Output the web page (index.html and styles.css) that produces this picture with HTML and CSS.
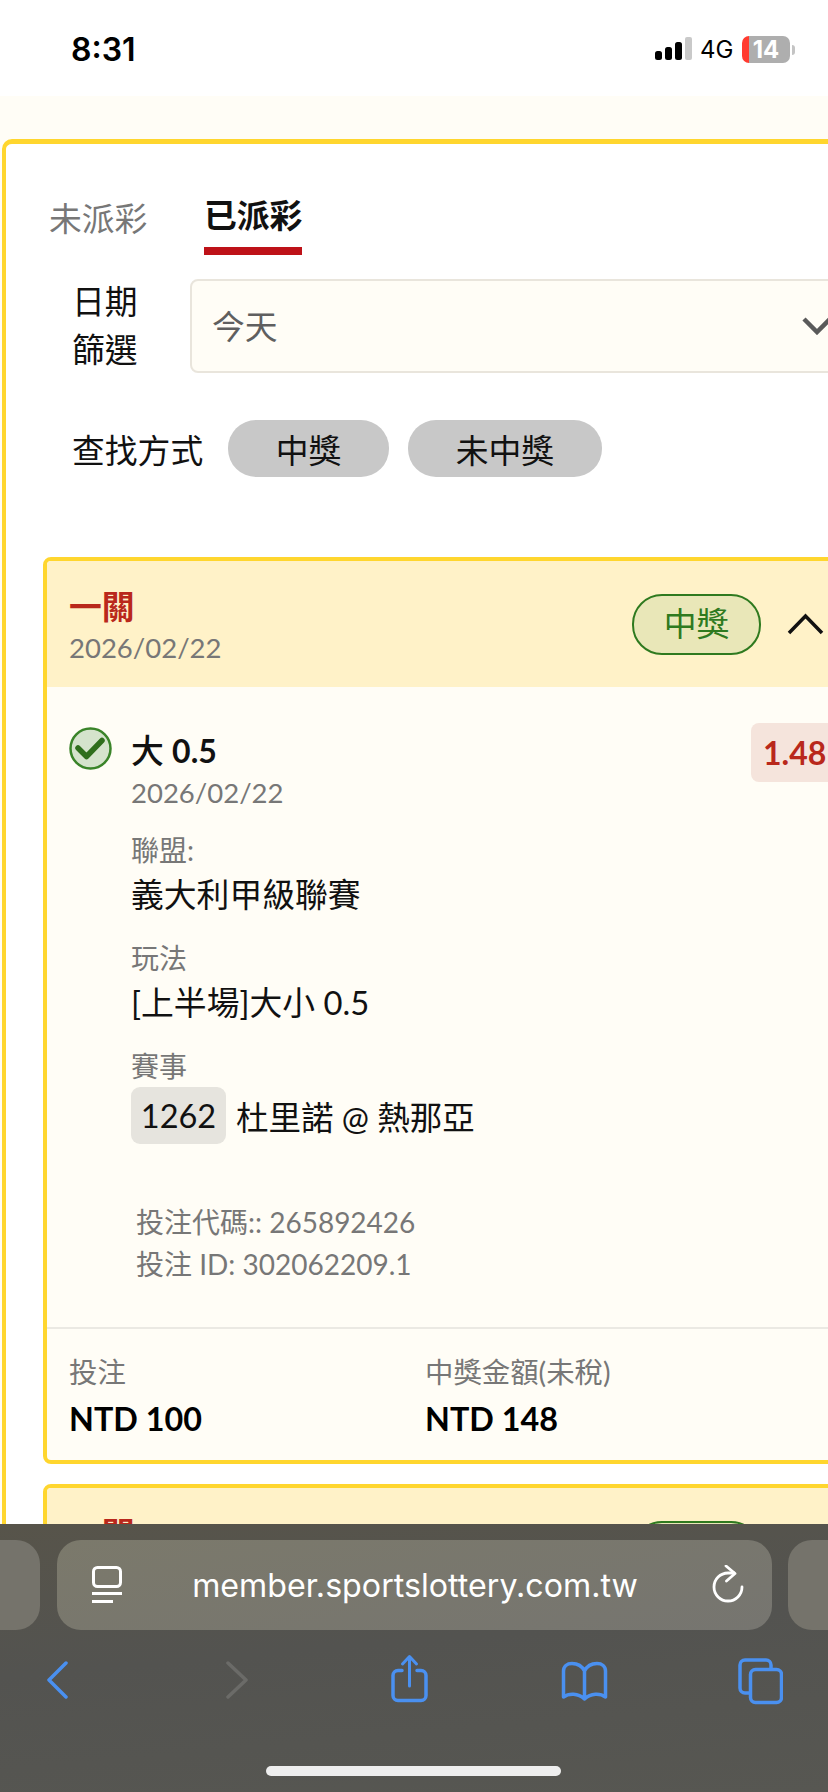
FILE: index.html
```html
<!DOCTYPE html>
<html lang="zh-Hant">
<head>
    <meta charset="UTF-8">
    <meta name="viewport" content="width=device-width, initial-scale=1.0">
    <title>已派彩</title>
    <link rel="stylesheet" href="styles.css">
</head>
<body>
<div class="phone">

    <div class="status-bar">
        <div class="time">8:31</div>
        <div class="status-icons">
            <svg class="signal" width="37" height="23" viewBox="0 0 37 23">
                <rect x="0" y="14" width="7" height="9" rx="2.5" fill="#000"/>
                <rect x="10" y="10" width="7" height="13" rx="2.5" fill="#000"/>
                <rect x="20" y="5" width="7" height="18" rx="2.5" fill="#000"/>
                <rect x="30" y="0" width="7" height="23" rx="2" fill="#c9c9c9"/>
            </svg>
            <span class="network">4G</span>
            <div class="battery">14</div>
            <div class="battery-tip"></div>
        </div>
    </div>

    <div class="page">
        <div class="panel">
            <div class="tabs">
                <div class="tab">未派彩</div>
                <div class="tab active">已派彩</div>
            </div>

            <div class="filter-row">
                <div class="filter-label">日期<br>篩選</div>
                <div class="select">
                    <span class="select-text">今天</span>
                    <svg width="30" height="18" viewBox="0 0 30 18"><path d="M2 2l13 13L28 2" fill="none" stroke="#5a5a5a" stroke-width="4.500"/></svg>
                </div>
            </div>

            <div class="search-row">
                <div class="search-label">查找方式</div>
                <button class="pill">中獎</button>
                <button class="pill">未中獎</button>
            </div>

            <div class="card">
                <div class="card-head">
                    <div class="card-name">
                        <div class="card-title">一關</div>
                        <div class="card-date">2026/02/22</div>
                    </div>
                    <div class="card-status">
                        <span class="badge">中獎</span>
                        <svg width="37" height="22" viewBox="0 0 37 22"><path d="M2 20L18.500 3 35 20" fill="none" stroke="#111" stroke-width="3.500"/></svg>
                    </div>
                </div>

                <div class="card-body">
                    <div class="selection">
                        <svg class="check" width="43" height="43" viewBox="0 0 43 43">
                            <circle cx="21.500" cy="21.500" r="20" fill="#d5e3cc" stroke="#3a8429" stroke-width="2.500"/>
                            <path d="M9 21l8.500 8.500L33 13.500" fill="none" stroke="#2f6e1c" stroke-width="5.500" stroke-linecap="round" stroke-linejoin="round"/>
                        </svg>
                        <div class="selection-info">
                            <div class="selection-top">
                                <div>
                                    <div class="pick">大 <span class="pick-num">0.5</span></div>
                                    <div class="pick-date">2026/02/22</div>
                                </div>
                                <div class="odds">1.48</div>
                            </div>
                            <div class="label first">聯盟:</div>
                            <div class="value">義大利甲級聯賽</div>
                            <div class="label">玩法</div>
                            <div class="value">[上半場]大小 0.5</div>
                            <div class="label">賽事</div>
                            <div class="match">
                                <span class="match-no">1262</span>
                                <span>杜里諾 @ 熱那亞</span>
                            </div>
                        </div>
                    </div>
                    <div class="codes">
                        <div>投注代碼:: 265892426</div>
                        <div>投注 ID: 302062209.1</div>
                    </div>
                </div>

                <div class="card-foot">
                    <div>
                        <div class="foot-label">投注</div>
                        <div class="foot-value">NTD 100</div>
                    </div>
                    <div>
                        <div class="foot-label">中獎金額(未稅)</div>
                        <div class="foot-value">NTD 148</div>
                    </div>
                </div>
            </div>

            <div class="card">
                <div class="card-head">
                    <div class="card-name">
                        <div class="card-title">一關</div>
                        <div class="card-date">2026/02/22</div>
                    </div>
                    <div class="card-status">
                        <span class="badge">中獎</span>
                        <svg width="37" height="22" viewBox="0 0 37 22"><path d="M2 20L18.500 3 35 20" fill="none" stroke="#111" stroke-width="3.500"/></svg>
                    </div>
                </div>
            </div>
        </div>
    </div>

    <!-- safari bar sits over the page -->
    <div class="browser-bar">
        <div class="url-row">
            <div class="url-side"></div>
            <div class="url-pill">
                <svg width="30" height="38" viewBox="0 0 30 38">
                    <rect x="1.500" y="1.500" width="27" height="19" rx="4" fill="none" stroke="#fff" stroke-width="3"/>
                    <path d="M0 27.500h30M0 35.500h21" stroke="#fff" stroke-width="3"/>
                </svg>
                <div class="url-text">member.sportslottery.com.tw</div>
                <svg width="32" height="40" viewBox="0 0 32 40">
                    <path d="M22 8h-6A14 14 0 1 0 30 22" fill="none" stroke="#fff" stroke-width="2.800" stroke-linecap="round"/>
                    <path d="M14 1l9 7.500-8.500 7.500" fill="none" stroke="#fff" stroke-width="2.800" stroke-linecap="round" stroke-linejoin="round"/>
                </svg>
            </div>
            <div class="url-side"></div>
        </div>

        <div class="toolbar">
            <svg class="tool-back" width="21" height="52" viewBox="0 0 21 52"><path d="M19 9L2 26l17 17" fill="none" stroke="#4a90f0" stroke-width="3.500" stroke-linecap="round" stroke-linejoin="round"/></svg>
            <svg class="tool-forward" width="22" height="52" viewBox="0 0 22 52"><path d="M2 9l18 17L2 43" fill="none" stroke="#6b6b68" stroke-width="3.500" stroke-linecap="round" stroke-linejoin="round"/></svg>
            <svg class="tool-share" width="37" height="52" viewBox="0 0 37 52">
                <path d="M11 16.500H7a5 5 0 0 0-5 5v20a5 5 0 0 0 5 5h23a5 5 0 0 0 5-5v-20a5 5 0 0 0-5-5h-4" fill="none" stroke="#4a90f0" stroke-width="3.500" stroke-linecap="round"/>
                <path d="M18.500 32V3M11.500 10l7-7.500 7 7.500" fill="none" stroke="#4a90f0" stroke-width="3" stroke-linecap="round" stroke-linejoin="round"/>
            </svg>
            <svg class="tool-book" width="47" height="52" viewBox="0 0 47 52">
                <path d="M23.500 45V17C21 12 16 9.500 11 9.500 6 9.500 2.500 12.500 2.500 17v26C8 39 17 39 23.500 45 30 39 39 39 44.500 43V17c0-4.500-3.500-7.500-8.500-7.500-5 0-10 2.500-12.500 7.500" fill="none" stroke="#4a90f0" stroke-width="3.500" stroke-linecap="round" stroke-linejoin="round"/>
            </svg>
            <svg class="tool-tabs" width="45" height="52" viewBox="0 0 45 52">
                <path d="M33 14v-3a5 5 0 0 0-5-5H7a5 5 0 0 0-5 5v23a5 5 0 0 0 5 5h4" fill="none" stroke="#4a90f0" stroke-width="3.500"/>
                <rect x="12.500" y="15.500" width="31" height="33" rx="5" fill="none" stroke="#4a90f0" stroke-width="3.500"/>
            </svg>
        </div>

        <div class="home-bar"></div>
    </div>

</div>
</body>
</html>
```

FILE: styles.css
```css
* {
    box-sizing: border-box;
}
body {
    margin: 0;
    padding: 0;
    background: #fff;
    font-family: Lato, "Noto Sans CJK TC", sans-serif;
    color: #111;
}
.phone {
    position: relative;
    width: 828px;
    height: 1792px;
    overflow: hidden;
}

/* status bar */
.status-bar {
    height: 96px;
    display: flex;
    justify-content: space-between;
    align-items: flex-start;
    padding: 0 33px 0 71px;
    background: #fff;
    font-family: Inter, sans-serif;
}
.time {
    margin-top: 28px;
    font-size: 32px;
    line-height: 44px;
    font-weight: 600;
    color: #000;
}
.status-icons {
    display: flex;
    align-items: center;
    height: 27px;
    margin-top: 36px;
}
.signal {
    margin-top: -2px;
}
.network {
    margin-left: 8px;
    width: 42px;
    font-size: 24px;
    color: #000;
}
.battery {
    width: 48px;
    height: 27px;
    border-radius: 7px;
    background: linear-gradient(to right, #ff3b30 7px, #aeaeae 7px);
    color: #fff;
    font-size: 24px;
    font-weight: 700;
    line-height: 27px;
    text-align: center;
}
.battery-tip {
    width: 3px;
    height: 10px;
    margin-left: 2px;
    border-radius: 0 3px 3px 0;
    background: #c4c4c4;
}

/* page */
.page {
    height: 1696px;
    padding: 43px 0 0 2px;
    background: #fffdf6;
}
.panel {
    width: 900px;
    height: 1700px;
    background: #fff;
    border-style: solid;
    border-color: #ffd62e;
    border-width: 5px 4px;
    border-radius: 10px;
}
.tabs {
    display: flex;
    gap: 57px;
    height: 111px;
    padding: 50px 0 0 43px;
}
.tab {
    width: 98px;
    padding-top: 3px;
    font-size: 32.800px;
    line-height: 44px;
    white-space: nowrap;
    color: #777;
}
.tab.active {
    height: 61px;
    padding-top: 0;
    font-weight: 700;
    color: #111;
    border-bottom: 8px solid #be1218;
}
.filter-row {
    display: flex;
    align-items: center;
    margin-top: 23px;
    padding-left: 66px;
}
.filter-label {
    width: 118px;
    font-size: 32.800px;
    line-height: 48px;
}
.select {
    display: flex;
    justify-content: space-between;
    align-items: center;
    width: 660px;
    height: 94px;
    padding: 0 16px 0 20px;
    background: #fffdf6;
    border: 2px solid #e9e5dc;
    border-radius: 8px;
    font-size: 32.800px;
    color: #5f5f5f;
}
.select-text {
    margin-bottom: 3px;
}
.search-row {
    display: flex;
    align-items: center;
    margin-top: 46px;
    padding-left: 66px;
}
.search-label {
    flex: none;
    width: 131px;
    margin-right: 25px;
    font-size: 32.800px;
    white-space: nowrap;
}
.pill {
    height: 57px;
    margin-right: 19px;
    padding: 0 47.700px;
    border: none;
    border-radius: 28px;
    background: #c8c8c8;
    font-family: inherit;
    font-size: 32.800px;
    color: #111;
}

/* bet card */
.card {
    width: 805px;
    margin: 80px 0 0 37px;
    background: #fffdf6;
    border: 4px solid #ffd62e;
    border-radius: 8px;
}
.card + .card {
    margin-top: 20px;
}
.card-head {
    display: flex;
    justify-content: space-between;
    align-items: center;
    height: 126px;
    padding: 0 20px 0 22px;
    background: #fff2c8;
    border-radius: 4px 4px 0 0;
}
.card-name {
    margin-top: 4px;
}
.card-title {
    font-size: 32.800px;
    line-height: 44px;
    font-weight: 700;
    color: #b9281b;
}
.card-date {
    font-size: 27.500px;
    line-height: 38px;
    color: #777;
}
.card-status {
    display: flex;
    align-items: center;
    gap: 26px;
}
.badge {
    width: 129px;
    height: 61px;
    border: 2.5px solid #2f7a1f;
    border-radius: 30px;
    background: #e9e7b8;
    font-size: 32.800px;
    line-height: 55px;
    text-align: center;
    color: #2f7a1f;
}
.card-body {
    padding: 40px 7px 42px 22px;
}
.selection {
    display: flex;
    gap: 19px;
}
.check {
    flex: none;
}
.selection-info {
    flex: 1;
}
.selection-top {
    display: flex;
    justify-content: space-between;
    align-items: flex-start;
}
.pick {
    font-size: 32.800px;
    line-height: 48px;
    font-weight: 500;
    color: #111;
}
.pick-num {
    font-size: 32px;
    font-weight: 700;
}
.pick-date {
    font-size: 27.500px;
    line-height: 36px;
    color: #777;
}
.odds {
    width: 86px;
    height: 59px;
    margin-top: -4px;
    padding-left: 12px;
    background: #f5e4dc;
    border-radius: 8px;
    font-size: 32px;
    line-height: 59px;
    font-weight: 700;
    color: #b9281b;
}
.label {
    margin-top: 18px;
    font-size: 28px;
    line-height: 38px;
    color: #777;
}
.label.first {
    margin-top: 20px;
}
.value {
    font-size: 32.800px;
    line-height: 52px;
}
.match {
    display: flex;
    align-items: center;
    gap: 10px;
    margin-top: 2px;
    font-size: 32.500px;
}
.match-no {
    width: 95px;
    height: 57px;
    background: #e6e4de;
    border-radius: 9px;
    line-height: 57px;
    text-align: center;
}
.codes {
    margin-top: 57px;
    padding-left: 67px;
    font-size: 28px;
    line-height: 42px;
    color: #777;
}
.card-foot {
    display: grid;
    grid-template-columns: 356px 1fr;
    padding: 24px 0 13px 22px;
    border-top: 2px solid #ebe9e3;
}
.foot-label {
    font-size: 28.400px;
    line-height: 38px;
    color: #777;
}
.foot-value {
    font-size: 32.300px;
    line-height: 56px;
    font-weight: 700;
    color: #000;
}

/* browser chrome */
.browser-bar {
    position: absolute;
    left: 0;
    right: 0;
    top: 1524px;
    height: 268px;
    padding-top: 16px;
    background: linear-gradient(175deg, #57544a 0%, #535350 45%, #575752 100%);
}
.url-row {
    display: flex;
    gap: 16.500px;
    margin-left: -60px;
}
.url-side {
    flex: none;
    width: 100px;
    height: 90px;
    border-radius: 24px;
    background: #75736b;
}
.url-pill {
    flex: none;
    display: flex;
    justify-content: space-between;
    align-items: center;
    width: 715px;
    height: 90px;
    padding: 0 27px 0 35px;
    border-radius: 24px;
    background: linear-gradient(170deg, #7b796b, #767570);
}
.url-text {
    margin-right: 4px;
    font-family: Inter, sans-serif;
    font-size: 32.200px;
    color: #fff;
    white-space: nowrap;
}
.toolbar {
    display: flex;
    height: 52px;
    margin-top: 24px;
    padding-left: 47px;
}
.tool-forward {
    margin-left: 158px;
}
.tool-share {
    margin-left: 143px;
}
.tool-book {
    margin-left: 133px;
}
.tool-tabs {
    margin-left: 130px;
}
.home-bar {
    width: 295px;
    height: 10px;
    margin: 60px 0 0 266px;
    border-radius: 5px;
    background: #eeeeee;
}
```
